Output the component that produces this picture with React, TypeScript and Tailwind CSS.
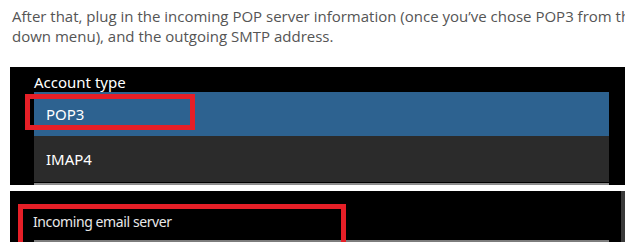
export default function App() {
  return (
    <div className="relative h-[242px] w-[625px] overflow-hidden bg-white font-['Open_Sans',sans-serif]">
      {/* Blog text above the screenshot */}
      <p className="whitespace-nowrap pl-3 pt-[6px] text-[15px] leading-[20px] text-[#555]">
        After that, plug in the incoming POP server information (once you’ve chose POP3 from the
        <br />
        down menu), and the outgoing SMTP address.
      </p>

      {/* Account type dropdown */}
      <div className="ml-[10px] mt-[21px] h-[118px] w-[630px] bg-black pt-[5px] font-['Noto_Sans',sans-serif]">
        <div className="pl-[24px] text-[15px] leading-[20px] text-white">Account type</div>
        <div className="ml-[24px] w-[575px]">
          <div className="flex h-[44px] items-center bg-[#2d6290] pl-3 text-[15px] text-white">POP3</div>
          <div className="flex h-[46px] items-center bg-[#2b2b2b] pl-3 text-[15px] text-white">IMAP4</div>
          <div className="mt-px h-[2px] bg-[#8c8c8c]" />
        </div>
      </div>

      {/* Incoming server field */}
      <div className="ml-[10px] mt-[6px] flex h-[60px]">
        <div className="w-[611px] bg-black pt-[21px] font-['Noto_Sans',sans-serif]">
          <div className="pl-[23px] text-[14px] leading-[20px] tracking-[-0.4px] text-[#e8e8e8]">Incoming email server</div>
          <div className="ml-[24px] mt-[8px] h-[4px] w-[575px] bg-[#7d7d7d]" />
        </div>
        <div className="w-[4px] bg-[#3a3a3a]" />
      </div>

      {/* Red highlight annotations */}
      <div className="absolute left-[25px] top-[94px] h-[36px] w-[170px] border-[5px] border-[#e61f27]" />
      <div className="absolute left-[18px] top-[204px] h-[60px] w-[328px] border-[5px] border-[#e61f27]" />
    </div>
  );
}
